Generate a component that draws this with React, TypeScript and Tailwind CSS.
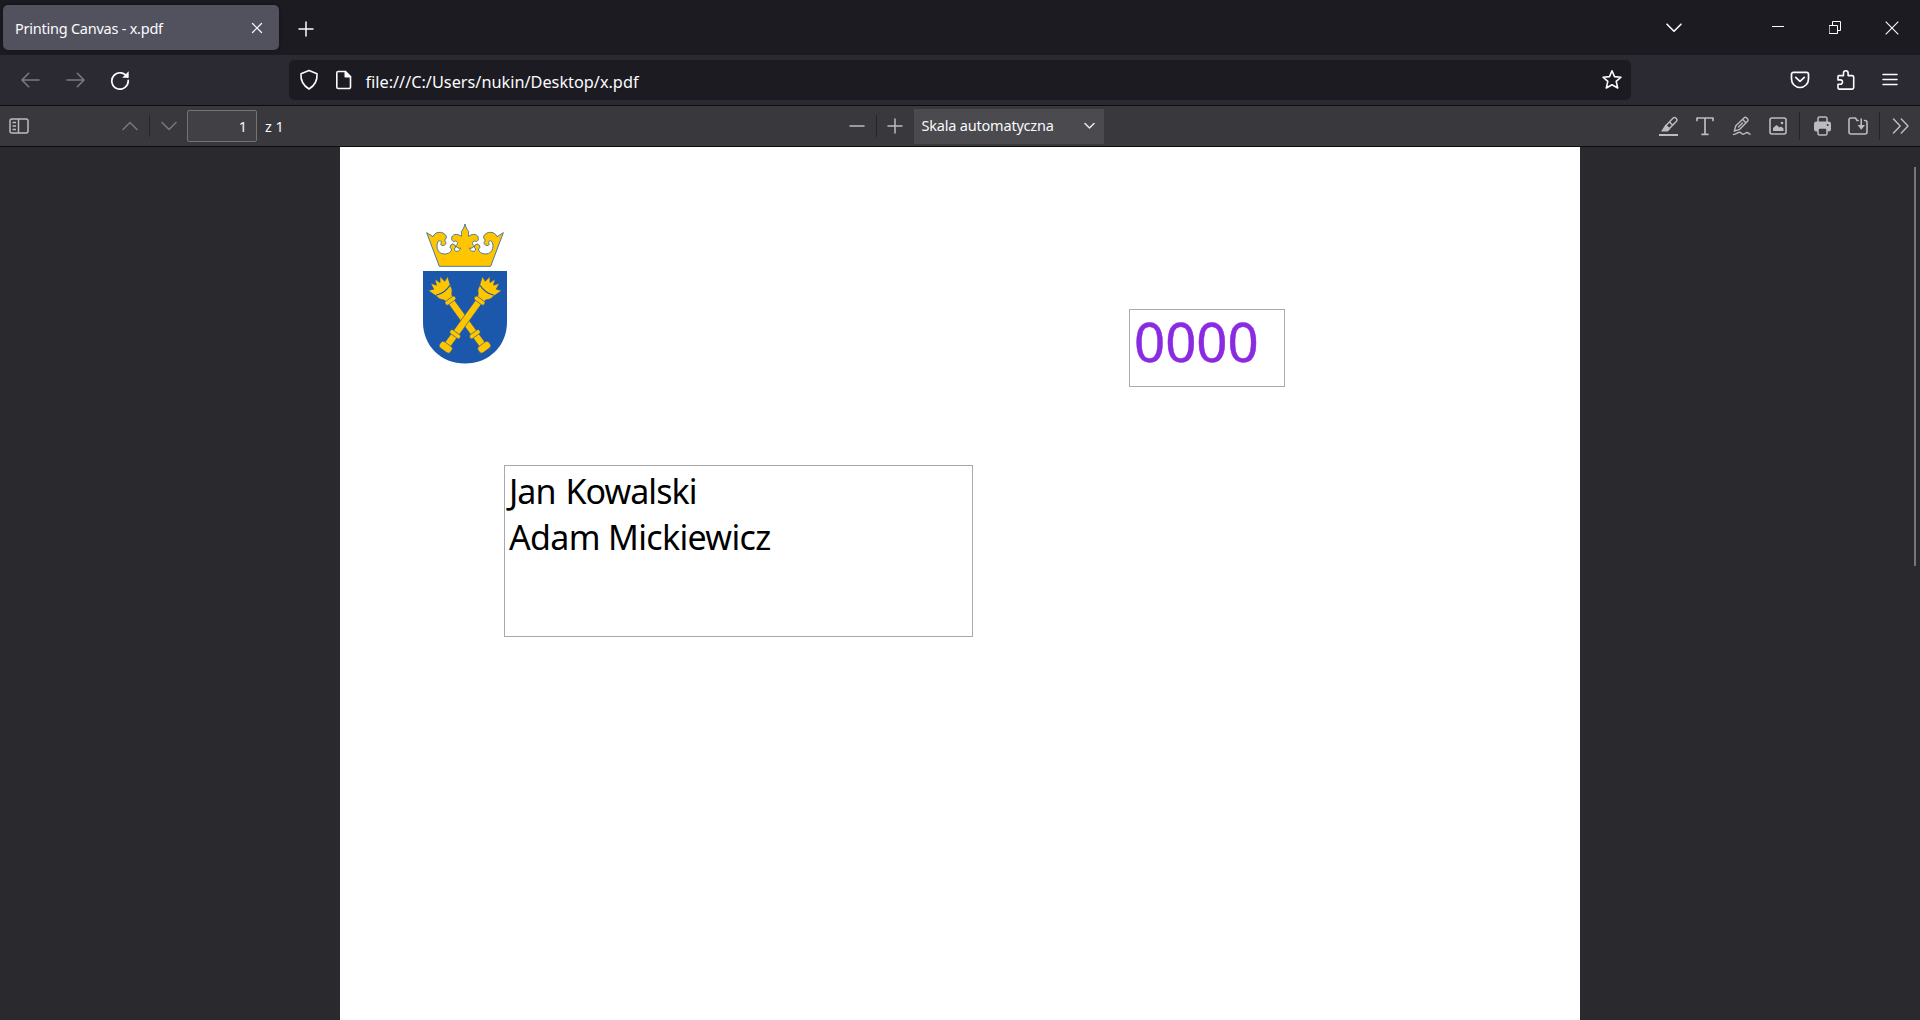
import type { ReactNode } from "react";

const UI_FONT = "font-['Noto_Sans','Open_Sans',sans-serif]";

type IconProps = {
  w: number;
  h: number;
  className?: string;
  stroke?: string;
  sw?: number;
  children: ReactNode;
};

function Icon({ w, h, className = "", stroke = "#fbfbfe", sw = 1.5, children }: IconProps) {
  return (
    <svg
      width={w}
      height={h}
      viewBox={`0 0 ${w} ${h}`}
      className={`block shrink-0 ${className}`}
      fill="none"
      stroke={stroke}
      strokeWidth={sw}
      strokeLinecap="round"
      strokeLinejoin="round"
    >
      {children}
    </svg>
  );
}

function TabBar() {
  return (
    <div className="flex h-[55px] shrink-0 items-start bg-[#1c1b22]">
      <div className="mt-[5px] ml-[3px] flex h-[45px] w-[276px] items-center rounded-[5px] bg-[#52525e] shadow-[0_0_4px_rgba(0,0,0,0.4)]">
        <span className="ml-[12px] pt-[2px] text-[14.5px] tracking-[-0.24px] whitespace-nowrap text-[#fbfbfe]">Printing Canvas - x.pdf</span>
        <Icon w={12} h={12} sw={1.2} className="mr-[16px] ml-auto">
          <path d="M1.500 1.500l9 9M10.500 1.500l-9 9" />
        </Icon>
      </div>
      <Icon w={16} h={16} sw={1.500} className="mt-[21px] ml-[18.500px]">
        <path d="M8 1v14M1 8h14" />
      </Icon>
      <Icon w={16} h={10} sw={1.600} className="mt-[22.500px] ml-auto">
        <path d="M1 1.200l7 7 7-7" />
      </Icon>
      <Icon w={12} h={2} sw={1} className="mt-[26px] ml-[90px]">
        <path d="M0 .5h12" strokeLinecap="butt" />
      </Icon>
      <Icon w={13} h={14} sw={1} className="mt-[21px] ml-[45px]">
        <path d="M.5 4.500h8v8h-8zM3.500 4.500v-4h8v9h-3" strokeLinejoin="miter" />
      </Icon>
      <Icon w={14} h={14} sw={1.100} className="mt-[20.500px] mr-[21.500px] ml-[42.500px]">
        <path d="M.7.7l12.600 12.600M13.300.7L.7 13.300" strokeLinecap="butt" />
      </Icon>
    </div>
  );
}

function NavBar() {
  return (
    <div className="flex h-[51px] shrink-0 items-start border-b border-[#0c0c0d] bg-[#2b2a33]">
      <Icon w={19} h={16} stroke="#7c7b82" className="mt-[17px] ml-[20.500px]">
        <path d="M18 8H1.200M7.700 1.300L1 8l6.700 6.700" />
      </Icon>
      <Icon w={19} h={16} stroke="#7c7b82" className="mt-[17px] ml-[26px]">
        <path d="M1 8h16.800M11.300 1.300L18 8l-6.700 6.700" />
      </Icon>
      <Icon w={20} h={20} className="mt-[15px] ml-[25px]" sw={1.700}>
        <path d="M17.300 7.200A8.200 8.200 0 1 0 18.200 10.400" />
        <path d="M18.700 1.200v6.500h-6.500z" fill="#fbfbfe" stroke="none" />
      </Icon>
      <div className="mt-[5px] ml-[159.500px] flex h-10 w-[1342px] shrink-0 items-center rounded-[5px] bg-[#1c1b22]">
        <Icon w={20} h={22} sw={1.600} className="ml-[9.500px]">
          <path d="M10 1.500L18 4.700C18.500 11 16.500 16 10 20 3.500 16 1.500 11 2 4.700z" />
        </Icon>
        <Icon w={17} h={20} sw={1.600} className="mb-px ml-[16.500px]">
          <path d="M3.300 1.500h7L15.500 6.700v10.300a1.500 1.500 0 0 1-1.500 1.500H3.300a1.500 1.500 0 0 1-1.500-1.500V3a1.500 1.500 0 0 1 1.500-1.500z" />
          <path d="M10.300 1.500v5.200h5.200z" fill="#fbfbfe" />
        </Icon>
        <span className="ml-[13.500px] pt-[5px] text-[16.300px] whitespace-nowrap text-[#fbfbfe]">file:///C:/Users/nukin/Desktop/x.pdf</span>
        <Icon w={22} h={22} sw={1.600} className="mr-2 ml-auto">
          <path d="M11 1.800l2.500 5.800 6.500.6-4.800 4.200 1.500 6.600L11 15.800 5.300 19l1.500-6.600L2 8.200l6.500-.6z" />
        </Icon>
      </div>
      <Icon w={20} h={18} sw={1.700} className="mt-[16px] ml-[159px]">
        <path d="M3.500 1.300h13a2 2 0 0 1 2 2V8a8.500 8.500 0 0 1-17 0V3.300a2 2 0 0 1 2-2zM5.700 6.300L10 10.300l4.300-4" />
      </Icon>
      <Icon w={20} h={22} sw={1.600} className="mt-[14px] ml-[26px]">
        <path d="M3 6.600h4.500V4a2.300 2.300 0 0 1 4.600 0v2.600h4a1.600 1.600 0 0 1 1.600 1.600v10.300a1.600 1.600 0 0 1-1.600 1.600H3a1 1 0 0 1-1-1v-3.800h2.300a2.200 2.200 0 0 0 0-4.400H2V7.600a1 1 0 0 1 1-1z" />
      </Icon>
      <Icon w={16} h={14} sw={1.500} className="mt-[18px] ml-[25.500px]">
        <path d="M1 1.500h14M1 6.500h14M1 11.500h14" />
      </Icon>
    </div>
  );
}

function Separator({ tall = false }: { tall?: boolean }) {
  return <div className={tall ? "h-7 w-px shrink-0 bg-[#252529]" : "h-[22px] w-px shrink-0 bg-[#252529]"} />;
}

const GREY = "#bcbcbe";

function ViewerBar() {
  return (
    <div className="flex h-[41px] shrink-0 items-center border-b border-[#0c0c0d] bg-[#38383d]">
      <Icon w={20} h={16} stroke={GREY} className="ml-[9px]">
        <rect x="1" y="1" width="18" height="14" rx="2" />
        <path d="M9.500 1v14M3.500 4.500H7M3.500 8H7M3.500 11.500H7" strokeLinecap="butt" />
      </Icon>
      <Icon w={16} h={10} stroke="#79797c" className="ml-[93px]">
        <path d="M1 8.500L8 1.500l7 7" />
      </Icon>
      <div className="ml-[11px]"><Separator /></div>
      <Icon w={16} h={10} stroke="#79797c" className="ml-[11px]">
        <path d="M1 1.500l7 7 7-7" />
      </Icon>
      <div className="ml-[10px] flex h-8 w-[70px] items-center justify-end rounded-[2px] border border-[#747477] bg-[#404045] pt-px pr-[9px] text-[14.500px] text-[#f9f9fa]">
        1
      </div>
      <div className="ml-2 flex w-[22px] pt-px text-[14.500px] whitespace-nowrap text-[#f9f9fa]">z 1</div>
      <Icon w={16} h={4} stroke={GREY} className="ml-[562px]">
        <path d="M1 2h14" />
      </Icon>
      <div className="ml-[11px]"><Separator /></div>
      <Icon w={16} h={16} stroke={GREY} className="ml-[10px]">
        <path d="M8 1v14M1 8h14" />
      </Icon>
      <div className="ml-[11px] flex h-[35px] w-[190px] items-center bg-[#4a4a4f]">
        <span className="ml-[7.500px] text-[14.500px] tracking-[-0.2px] whitespace-nowrap text-[#f9f9fa]">Skala automatyczna</span>
        <Icon w={11} h={8} sw={1.600} stroke="#e4e4e6" className="mr-[9.500px] ml-auto">
          <path d="M1 1.500l4.500 4.500L10 1.500" />
        </Icon>
      </div>
      <Icon w={22} h={22} stroke={GREY} className="ml-auto">
        <path d="M1 20h19" strokeWidth="2" strokeLinecap="butt" />
        <path d="M8 10.500l7.200-7.500a2 2 0 0 1 2.600 0l.7.700a2 2 0 0 1 0 2.600l-7.300 7.500zM11.500 7l3.300 3.300" />
        <path d="M7.600 9.600l4.500 4.500-2.300 2.400H3z" fill={GREY} stroke="none" />
      </Icon>
      <Icon w={20} h={20} stroke={GREY} sw={1.700} className="ml-[15px]">
        <path d="M2 4.500V2h16v2.500M10 2v16M7 18.300h6" />
      </Icon>
      <Icon w={20} h={20} stroke={GREY} sw={1.400} className="ml-[16.500px]">
        <path d="M3.800 9.800L12 2a2 2 0 0 1 2.800 0l.7.700a2 2 0 0 1 0 2.600L7.500 13.400l-5.200 1.800zM10.700 3.500l3.300 3.300M6.500 11l4-4" />
        <path d="M1.500 18.500c3 0 4-2.300 6-2.300s1.500 2 3.500 2 2.500-1.700 4-1.700 1.500 1.500 3 1.700" />
      </Icon>
      <Icon w={18} h={18} stroke={GREY} sw={1.600} className="ml-[17px]">
        <rect x="1" y="1" width="16" height="16" rx="2" />
        <path d="M4 14V11l3.500-3 3 2.500 1.500-1 2.500 2V14z" fill={GREY} stroke="none" />
        <circle cx="13" cy="6" r="1.300" fill={GREY} stroke="none" />
      </Icon>
      <div className="ml-[12px]"><Separator tall /></div>
      <Icon w={19} h={20} stroke={GREY} sw={1.500} className="ml-[13px]">
        <path d="M5 6V2.500A1.500 1.500 0 0 1 6.500 1h6A1.500 1.500 0 0 1 14 2.500V6" />
        <path d="M3.500 5.500h12A2.500 2.500 0 0 1 18 8v5a2.500 2.500 0 0 1-2.500 2.500h-12A2.500 2.500 0 0 1 1 13V8A2.500 2.500 0 0 1 3.500 5.500z" fill={GREY} stroke="none" />
        <rect x="5" y="12" width="9" height="7" rx="1.500" fill="#38383d" />
        <circle cx="14.700" cy="9" r="1" fill="#38383d" stroke="none" />
      </Icon>
      <Icon w={20} h={18} stroke={GREY} sw={1.600} className="ml-[16.500px]">
        <path d="M9 3.500L7.500 1H3a2 2 0 0 0-2 2v12a2 2 0 0 0 2 2h14a2 2 0 0 0 2-2V5.500a2 2 0 0 0-2-2h-.5M9 3.500h1.200" />
        <path d="M13.200 2v9" />
        <path d="M9.500 8h7.500l-3.700 4.800z" fill={GREY} stroke="none" />
      </Icon>
      <div className="ml-[11px]"><Separator tall /></div>
      <Icon w={17} h={16} stroke={GREY} className="mr-[11px] ml-[12px]">
        <path d="M1.500 1l6.700 7-6.700 7M9.300 1L16 8l-6.700 7" />
      </Icon>
    </div>
  );
}

function Mace() {
  return (
    <g fill="#ffc600" stroke="#1b57ab" strokeWidth=".6" strokeLinejoin="round">
      <path d="M-3.500 -25h7v57h-7z" />
      <path d="M-8.500 -36L-12 -46l5.200 2.200L-5.800 -50.500-2.200 -45.500 0 -51.500l2.200 6 3.600-5 1 6.700L12 -46 8.500 -36C8 -30 4.200 -31 4.200 -26.500H-4.200C-4.200 -31 -8 -30 -8.500 -36z" />
      <path d="M-8.500 -37.500Q0 -34 8.500 -37.500" fill="none" strokeWidth="1" />
      <rect x="-6" y="-27" width="12" height="4.400" rx="1.900" />
      <rect x="-6" y="14.500" width="12" height="4.400" rx="1.900" />
      <rect x="-6.700" y="29" width="13.400" height="7.500" rx="2.800" />
    </g>
  );
}

function CoatOfArms() {
  return (
    <svg width="86" height="142" viewBox="422 223 86 142" className="block">
      <path
        transform="translate(424 220) scale(.33333)"
        d="M8 38L27 50C30 41 40 36 49 37C60 38 68 46 67 54C62 58 61 62 66 68C66 76 54 80 50 73C54 67 51 60 44 63C35 72 37 101 60 102C73 102 84 95 82 87A8 8 0 1 1 91 87C92 98 106 96 110 84C106 86 97 84 96 77C103 71 101 64 94 63C89 68 82 62 83 55C83 44 98 38 112 49C113 42 112 36 112 34C116 31 120 24 123 12C126 24 130 31 134 34C134 36 133 42 134 49C148 38 163 44 163 55C164 62 157 68 152 63C145 64 143 71 150 77C149 84 140 86 136 84C140 96 154 98 155 87A8 8 0 1 1 164 87C162 95 173 102 186 102C209 101 211 72 202 63C195 60 192 67 196 73C192 80 180 76 180 68C185 62 184 58 179 54C178 46 186 38 197 37C206 36 216 41 219 50L238 38L200 139H46z"
        fill="#ffc600"
        stroke="#3f719f"
        strokeWidth="2.800"
      />
      <path d="M423 271h84v51c0 24-18 41.500-42 41.500S423 346 423 322z" fill="#1b57ab" />
      <g transform="translate(465 320.700) rotate(-36)"><Mace /></g>
      <g transform="translate(465 320.700) rotate(36)"><Mace /></g>
    </svg>
  );
}

function PdfPage() {
  return (
    <div className="relative h-full w-[1240px] bg-white">
      <div className="absolute top-[76px] left-[82px]"><CoatOfArms /></div>
      <div className="absolute top-[162px] left-[789px] h-[78px] w-[156px] border border-[#aaaab2] pl-[4px] text-[54.500px] leading-[63px] text-[#8a2be2] [-webkit-text-stroke:0.5px_#8a2be2]">
        0000
      </div>
      <div className="absolute top-[318px] left-[164px] h-[172px] w-[469px] border border-[#a8a8b0] pt-[3px] pl-[4px] text-[34px] leading-[45.500px] whitespace-nowrap text-black">
        <p className="tracking-[-0.95px] [word-spacing:2px]">Jan Kowalski</p>
        <p className="tracking-[-0.67px]">Adam Mickiewicz</p>
      </div>
    </div>
  );
}

export default function App() {
  return (
    <div className={`flex h-[1020px] w-[1920px] flex-col overflow-hidden bg-[#2a2a2e] ${UI_FONT}`}>
      <TabBar />
      <NavBar />
      <ViewerBar />
      <div className="relative flex min-h-0 flex-1 justify-center">
        <PdfPage />
        <div className="absolute top-5 right-[4px] h-[399px] w-[2px] bg-[#77777a]" />
      </div>
    </div>
  );
}
